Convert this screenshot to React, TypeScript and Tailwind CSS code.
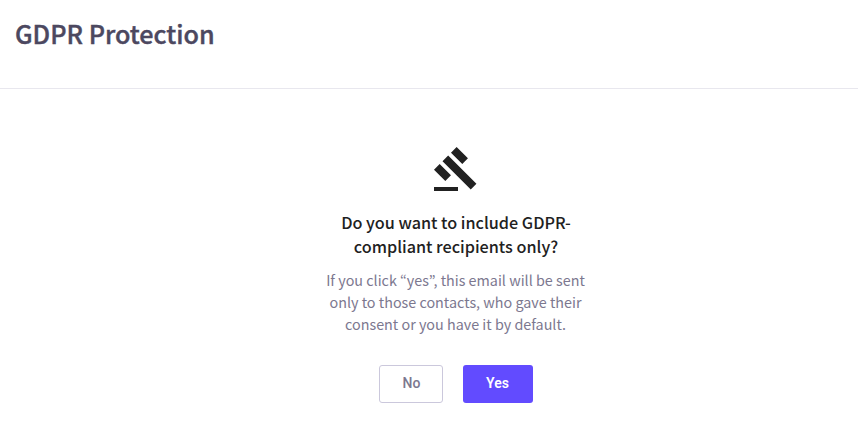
import React from "react";
import { MdGavel } from "react-icons/md";

const buttonStyle =
  "h-[38px] rounded-[3px] pb-0.5 font-['Roboto',sans-serif] text-sm cursor-pointer";

function App() {
  return (
    <div className="min-h-screen bg-white font-['Noto_Sans_CJK_KR','Open_Sans',sans-serif]">
      <header className="h-[89px] border-b border-[#e8e7ee] px-[15px] pt-[15px]">
        <h1 className="text-[25.15px] leading-9 font-medium text-[#4c4860] [-webkit-text-stroke:0.4px_#4c4860]">
          GDPR Protection
        </h1>
      </header>

      <main className="ml-[54px] flex flex-col items-center pt-14 text-center">
        <MdGavel size={48} className="text-[#212121]" />

        <h2 className="mt-[17px] text-[16.2px] leading-6 font-medium text-[#212121]">
          Do you want to include GDPR-
          <br />
          compliant recipients only?
        </h2>

        <p className="mt-[11px] pr-px text-[14.35px] leading-[22px] text-[#7c788f]">
          If you click “yes”, this email will be sent
          <br />
          only to those contacts, who gave their
          <br />
          consent or you have it by default.
        </p>

        {/* actions */}
        <div className="mt-[30px] flex gap-5">
          <button
            className={`${buttonStyle} w-16 border border-[#cbc8dc] bg-white pl-px font-medium text-[#7c788f]`}
          >
            No
          </button>
          <button
            className={`${buttonStyle} w-[70px] bg-[#624bff] pr-px font-semibold text-white`}
          >
            Yes
          </button>
        </div>
      </main>
    </div>
  );
}

export default App;
